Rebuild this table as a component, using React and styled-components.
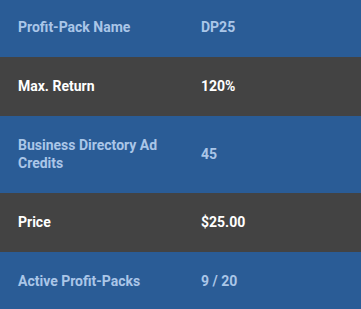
import React from 'react';
import styled, { createGlobalStyle } from 'styled-components';

const GlobalStyle = createGlobalStyle`
    html, body{
        margin:0;
        padding:0;
        background:#2a5c96;
        font-family: Roboto, "Liberation Sans", sans-serif;
    }
`;

const rows = [
    { label: 'Profit-Pack Name', value: 'DP25' },
    { label: 'Max. Return', value: '120%' },
    { label: 'Business Directory Ad Credits', value: '45' },
    { label: 'Price', value: '$25.00' },
    { label: 'Active Profit-Packs', value: '9 / 20' },
];

const App = () => {
    return (
        <>
            <GlobalStyle />
            <Table>
                {rows.map((row, i) => (
                    <Row key={row.label} dark={i % 2 === 1}>
                        <Cell>{row.label}</Cell>
                        <Cell>{row.value}</Cell>
                    </Row>
                ))}
            </Table>
        </>
    );
};

const Table = styled.div`
    display:flex;
    flex-direction:column;
    width:361px;
    margin-top:-2px;
`;

const Row = styled.div`
    display:grid;
    grid-template-columns:183px 1fr;
    align-items:center;
    background: ${p => (p.dark ? '#434343' : '#2a5c96')};
    color: ${p => (p.dark ? '#ffffff' : '#aac6e8')};
    border-bottom:1px solid ${p => (p.dark ? '#434343' : '#2a5c96')};
`;

const Cell = styled.div`
    padding:20px 18px;
    font-size:14px;
    font-weight:700;
    line-height:18px;
`;

export default App;
